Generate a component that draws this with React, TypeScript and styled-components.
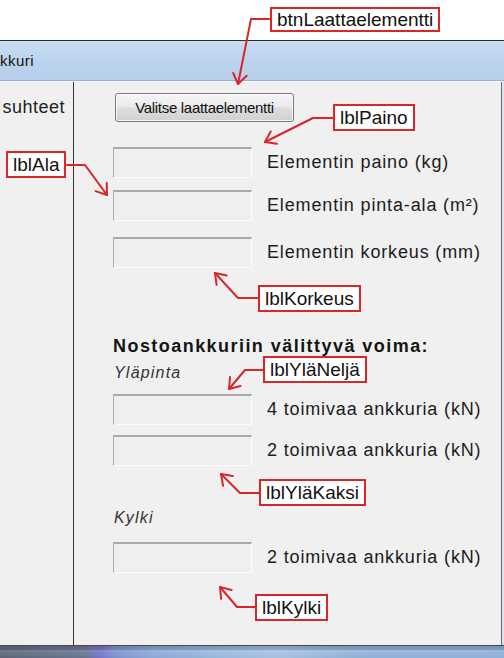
import React from "react";
import styled, { createGlobalStyle } from "styled-components";

const Global = createGlobalStyle`
  html, body { margin: 0; padding: 0; background: #fff; }
  body { font-family: "Liberation Sans", Arial, sans-serif; }
`;

const Page = styled.div`
  position: relative;
  width: 504px;
  height: 658px;
  overflow: hidden;
  background: #fff;
  display: flex;
  flex-direction: column;
`;

const TopSpace = styled.div`
  height: 40px;
  flex: none;
`;

const Window = styled.div`
  flex: none;
  display: flex;
  flex-direction: column;
  border-top: 1px solid #2b2b2b;
`;

const TitleBar = styled.div`
  height: 40px;
  box-sizing: border-box;
  display: flex;
  align-items: center;
  background: linear-gradient(to bottom, #c8ddf4 0%, #bdd4ef 50%, #b7cfeb 100%);
  border-bottom: 1px solid #98b0cf;
  font-size: 15px;
  letter-spacing: 0.5px;
  color: #111;
`;

const Body = styled.div`
  height: 564px;
  display: flex;
  background: #f0f0f0;
  border-top: 1px solid #f8fafc;
  box-sizing: border-box;
  border-right: 2px solid #dbe3ec;
`;

const LeftPane = styled.div`
  width: 74px;
  flex: none;
  border-right: 1px solid #333;
  padding: 15px 8px 0 0;
  box-sizing: border-box;
  text-align: right;
  font-size: 18px;
  line-height: 20px;
  letter-spacing: 0.5px;
  color: #222;
  white-space: nowrap;
`;

const RightPane = styled.div`
  flex: 1;
  border-right: 1px solid #6a6a6a;
  padding: 11px 0 0 39px;
  display: flex;
  flex-direction: column;
  align-items: flex-start;
`;

const SelectButton = styled.button`
  margin-left: 2px;
  width: 179px;
  height: 29px;
  box-sizing: border-box;
  border: 1px solid #7a7a7a;
  border-radius: 3px;
  background: linear-gradient(to bottom, #f5f5f5 0%, #ececec 45%, #dedede 52%, #d0d0d0 100%);
  box-shadow: inset 0 0 0 1px rgba(255, 255, 255, 0.75);
  font-family: "Liberation Sans", Arial, sans-serif;
  font-size: 15px;
  letter-spacing: -0.3px;
  color: #111;
  padding: 0;
`;

const FieldRow = styled.div<{ $mt: number }>`
  margin-top: ${(p) => p.$mt}px;
  display: flex;
  align-items: center;
  gap: 15px;
`;

const InputBox = styled.input`
  width: 139px;
  height: 31px;
  box-sizing: border-box;
  margin: 0;
  padding: 0;
  border-top: 2px solid #a9a9a9;
  border-left: 1px solid #adadad;
  border-right: 1px solid #fbfbfb;
  border-bottom: 1px solid #fbfbfb;
  background: #efefef;
  outline: none;
`;

const FieldLabel = styled.span`
  font-size: 18px;
  letter-spacing: 0.85px;
  color: #1c1c1c;
  white-space: nowrap;
`;

const Heading = styled.div<{ $mt: number }>`
  margin-top: ${(p) => p.$mt}px;
  font-size: 18px;
  line-height: 20px;
  font-weight: bold;
  letter-spacing: 1.45px;
  color: #151515;
  white-space: nowrap;
`;

const SubHeading = styled.div<{ $mt: number }>`
  margin-top: ${(p) => p.$mt}px;
  margin-left: 1px;
  font-size: 16px;
  line-height: 18px;
  font-style: italic;
  letter-spacing: 1.2px;
  color: #333;
`;

const BottomLine = styled.div`
  height: 1px;
  background: #4a4a4a;
`;

const Taskbar = styled.div`
  height: 12px;
  background:
    linear-gradient(to bottom, rgba(60, 70, 90, 0.3) 0%, rgba(60, 70, 90, 0.2) 30%, rgba(255, 255, 255, 0.12) 38%, rgba(255, 255, 255, 0) 100%),
    linear-gradient(to right, #5a6578 0%, #66758f 17%, #7474cc 20%, #7f92cc 23%, #8aa8d4 30%, #9ab9de 45%, #a6c0e0 55%, #91b1d8 70%, #8fb0d8 100%);
`;

const Overlay = styled.svg`
  position: absolute;
  left: 0;
  top: 0;
  pointer-events: none;
`;

const Callout = styled.div<{ $x: number; $y: number; $h?: number }>`
  position: absolute;
  left: ${(p) => p.$x}px;
  top: ${(p) => p.$y}px;
  height: ${(p) => p.$h ?? 27}px;
  line-height: ${(p) => (p.$h ?? 27) - 4}px;
  box-sizing: border-box;
  padding: 0 5px;
  border: 2px solid #d8262b;
  background: #fff;
  font-size: 19px;
  color: #111;
  white-space: nowrap;
`;

type Pt = [number, number];

const arrows: Pt[][] = [
  [[270, 19], [251, 19], [238, 84]],
  [[333, 118], [313, 118], [265, 142]],
  [[67, 165], [85, 165], [107, 195]],
  [[258, 298], [238, 298], [215, 273]],
  [[263, 370], [245, 370], [229, 389]],
  [[259, 493], [240, 493], [221, 474]],
  [[255, 607], [237, 607], [220, 587]],
];

const callouts = [
  { text: "btnLaattaelementti", x: 270, y: 7, h: 25 },
  { text: "lblPaino", x: 333, y: 104 },
  { text: "lblAla", x: 6, y: 151 },
  { text: "lblKorkeus", x: 258, y: 285 },
  { text: "lblYläNeljä", x: 263, y: 356 },
  { text: "lblYläKaksi", x: 259, y: 479 },
  { text: "lblKylki", x: 255, y: 594 },
];

function arrowHead(from: Pt, tip: Pt): string {
  const dx = from[0] - tip[0];
  const dy = from[1] - tip[1];
  const len = Math.hypot(dx, dy);
  const ux = dx / len;
  const uy = dy / len;
  const a = (35 * Math.PI) / 180;
  const L = 12;
  const r1: Pt = [
    tip[0] + L * (ux * Math.cos(a) - uy * Math.sin(a)),
    tip[1] + L * (ux * Math.sin(a) + uy * Math.cos(a)),
  ];
  const r2: Pt = [
    tip[0] + L * (ux * Math.cos(-a) - uy * Math.sin(-a)),
    tip[1] + L * (ux * Math.sin(-a) + uy * Math.cos(-a)),
  ];
  return `M${r1[0]} ${r1[1]} L${tip[0]} ${tip[1]} L${r2[0]} ${r2[1]}`;
}

export default function App() {
  return (
    <>
      <Global />
      <Page>
        <TopSpace />
        <Window>
          <TitleBar>kkuri</TitleBar>
          <Body>
            <LeftPane>suhteet</LeftPane>
            <RightPane>
              <SelectButton>Valitse laattaelementti</SelectButton>
              <FieldRow $mt={25}>
                <InputBox readOnly />
                <FieldLabel>Elementin paino (kg)</FieldLabel>
              </FieldRow>
              <FieldRow $mt={12}>
                <InputBox readOnly />
                <FieldLabel>Elementin pinta-ala (m²)</FieldLabel>
              </FieldRow>
              <FieldRow $mt={16}>
                <InputBox readOnly />
                <FieldLabel>Elementin korkeus (mm)</FieldLabel>
              </FieldRow>
              <Heading $mt={68}>Nostoankkuriin välittyvä voima:</Heading>
              <SubHeading $mt={8}>Yläpinta</SubHeading>
              <FieldRow $mt={12}>
                <InputBox readOnly />
                <FieldLabel>4 toimivaa ankkuria (kN)</FieldLabel>
              </FieldRow>
              <FieldRow $mt={10}>
                <InputBox readOnly />
                <FieldLabel>2 toimivaa ankkuria (kN)</FieldLabel>
              </FieldRow>
              <SubHeading $mt={43}>Kylki</SubHeading>
              <FieldRow $mt={15}>
                <InputBox readOnly />
                <FieldLabel>2 toimivaa ankkuria (kN)</FieldLabel>
              </FieldRow>
            </RightPane>
          </Body>
          <BottomLine />
          <Taskbar />
        </Window>

        <Overlay width="504" height="658" viewBox="0 0 504 658">
          {arrows.map((pts, i) => (
            <g key={i} fill="none" stroke="#d8262b" strokeWidth="2" strokeLinejoin="round" strokeLinecap="round">
              <polyline points={pts.map((p) => p.join(",")).join(" ")} />
              <path d={arrowHead(pts[pts.length - 2], pts[pts.length - 1])} />
            </g>
          ))}
        </Overlay>
        {callouts.map((c) => (
          <Callout key={c.text} $x={c.x} $y={c.y} $h={c.h}>
            {c.text}
          </Callout>
        ))}
      </Page>
    </>
  );
}
